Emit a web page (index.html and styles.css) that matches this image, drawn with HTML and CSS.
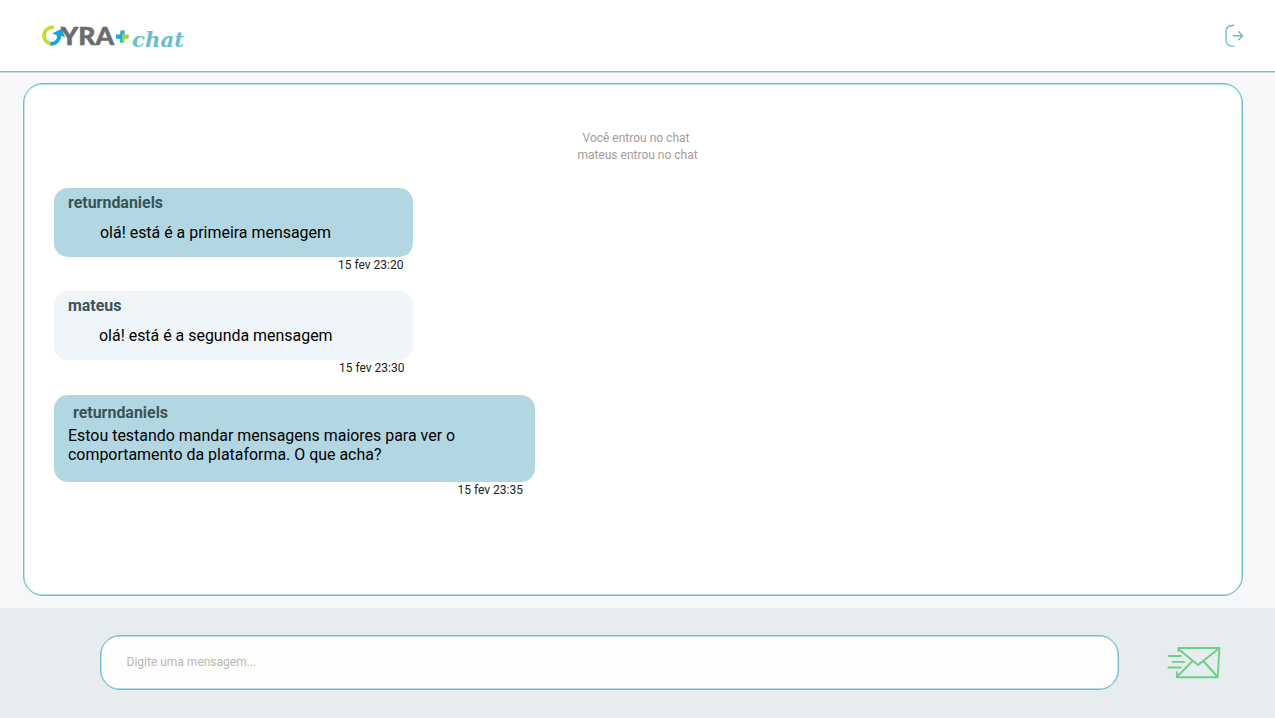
FILE: index.html
```
<!DOCTYPE html>
<html lang="pt-BR">
<head>
<meta charset="utf-8">
<title>GYRA+ chat</title>
<link rel="stylesheet" href="styles.css">
</head>
<body>
<header class="topbar">
  <svg class="logo" width="150" height="36" viewBox="38 18 150 36" role="img" aria-label="GYRA+ chat">
    <path class="ring-lime" d="M54 27.6A8.2 8.2 0 1 0 50.5 43.8"/>
    <path class="ring-blue" d="M50.3 43.8C55.8 43.8 59.6 40 59.8 34"/>
    <path class="arrow" d="M52.2 33.6L62 28.4L65 37.4L61 35.5L57.5 38L56.4 35Z"/>
    <text class="brand" x="60.8" y="44.8" textLength="53.4" lengthAdjust="spacingAndGlyphs">YRA</text>
    <path class="plus-blue" d="M120.2 30.5h4.4v4.2h-4.4zM116 34.6h6v4.2h-6zM120.2 38.8h2.4v4h-2.4z"/>
    <path class="plus-lime" d="M122 34.6h6.7v4.2h-6.7zM122.4 38.8h2.2v4h-2.2zM120.2 30.5h1.6v2h-1.6z"/>
    <text class="brand-chat" x="132" y="47.4" textLength="52" lengthAdjust="spacingAndGlyphs">chat</text>
  </svg>
  <a class="logout" aria-label="Sair">
    <svg width="20" height="24" viewBox="1225 23 20 24">
      <path d="M1233.9 24.2C1228.9 24.4 1226.1 25.6 1226.1 29.4V39.9C1226.1 43.9 1228.9 45 1233.9 45.4M1233.3 34.7H1242.6M1238.7 30.7L1242.6 34.7L1238.7 38.7"/>
    </svg>
  </a>
</header>
<main class="stage">
  <section class="chat">
    <div class="notices">
      <p class="joined-self">Você entrou no chat</p>
      <p>mateus entrou no chat</p>
    </div>
    <article class="message">
      <div class="bubble own">
        <h2 class="author">returndaniels</h2>
        <p class="body">olá! está é a primeira mensagem</p>
      </div>
      <time class="time">15 fev 23:20</time>
    </article>
    <article class="message">
      <div class="bubble">
        <h2 class="author">mateus</h2>
        <p class="body second">olá! está é a segunda mensagem</p>
      </div>
      <time class="time later">15 fev 23:30</time>
    </article>
    <article class="message wide">
      <div class="bubble own">
        <h2 class="author">returndaniels</h2>
        <p class="body">Estou testando mandar mensagens maiores para ver o comportamento da plataforma. O que acha?</p>
      </div>
      <time class="time">15 fev 23:35</time>
    </article>
  </section>
</main>
<footer class="composer">
  <input class="field" type="text" placeholder="Digite uma mensagem...">
  <button class="send" aria-label="Enviar">
    <svg width="54" height="34" viewBox="1167 646 54 34">
      <path d="M1178.4 651V648H1219.4L1217.7 677.2H1176.9V672M1179 649.5L1198 665L1218.5 648.8M1192.5 661L1177.3 676.5M1203.7 661.5L1217.2 676.5M1168.4 656H1181M1172.5 661.9H1184M1168.4 667.5H1181"/>
    </svg>
  </button>
</footer>
</body>
</html>
```
FILE: styles.css
```
* { box-sizing: border-box; }
body {
  margin: 0;
  height: 718px;
  display: flex;
  flex-direction: column;
  overflow: hidden;
  background: #f5f7f9;
  font-family: Roboto, sans-serif;
  color: #000;
}
p, h2 { margin: 0; }
.topbar {
  height: 72px;
  flex: none;
  display: flex;
  justify-content: space-between;
  align-items: center;
  padding: 0 30px 0 38px;
  background: #fff;
  border-bottom: 1px solid #6bbecb;
  box-shadow: 0 .4px 0 #6bbecb;
}
.logo { display: block; }
.ring-lime, .ring-blue { fill: none; stroke-width: 3.8; }
.ring-lime { stroke: #c9dc2c; }
.ring-blue { stroke: #14a5dc; }
.arrow { fill: #14a5dc; }
.plus-blue { fill: #19aadd; }
.plus-lime { fill: #a5d04c; }
.brand { font: 900 25.5px Lato, sans-serif; fill: #6b6c70; stroke: #6b6c70; stroke-width: .5; }
.brand-chat { font: italic 700 21px "DejaVu Serif", serif; fill: #6bbfcc; }
.logout svg { display: block; fill: none; stroke: #6bbecb; stroke-width: 1.4; stroke-linecap: round; stroke-linejoin: round; }
.stage {
  height: 536px;
  flex: none;
  padding: 11px 32px 12px 23px;
}
.chat {
  height: 513px;
  padding: 46px 30px 0;
  background: #fff;
  border: 1px solid #6bbecb;
  box-shadow: inset 0 0 0 .4px #6bbecb;
  border-radius: 20px;
}
.notices {
  height: 58px;
  font-size: 12px;
  line-height: 17px;
  text-align: center;
  color: #a89a9d;
  padding-left: 9px;
}
.joined-self { padding-right: 3px; }
.message { width: 358.5px; height: 103px; }
.bubble {
  height: 69px;
  padding: 6px 14px;
  border-radius: 14px;
  background: #eff5f8;
}
.own { background: #b3d7e2; }
.author { font-size: 15.95px; line-height: 18px; font-weight: 700; color: #3a5358; }
.body { font-size: 15.95px; line-height: 18px; padding: 12px 0 0 32px; }
.second { padding-left: 31px; }
.time {
  display: block;
  padding: 1px 9px 0 0;
  text-align: right;
  font-size: 12px;
  line-height: 14px;
  color: #222;
}
.later { padding-right: 8px; }
.wide { width: 481px; margin-top: 1px; }
.wide .bubble { height: 87px; padding-top: 9px; }
.wide .author { padding-left: 5px; }
.wide .body { width: 420px; padding: 4px 0 0; line-height: 19px; }
.wide .time { padding-right: 12px; }
.composer {
  flex: 1;
  display: flex;
  align-items: center;
  justify-content: space-between;
  padding: 0 54px 0 100px;
  background: #e7edef;
}
.field {
  width: 1019px;
  height: 55px;
  margin-bottom: 1px;
  padding: 0 25.5px 2px;
  border: 1px solid #6bbecb;
  box-shadow: inset 0 0 0 .4px #6bbecb;
  border-radius: 20px;
  background: #fefdfc;
  font: 12px Roboto, sans-serif;
  outline: 0;
}
.field::placeholder { color: #b9b8b8; opacity: 1; }
.send { padding: 0; border: 0; background: none; }
.send svg { display: block; fill: none; stroke: #6bd08a; stroke-width: 1.9; stroke-linecap: round; stroke-linejoin: round; }
```
